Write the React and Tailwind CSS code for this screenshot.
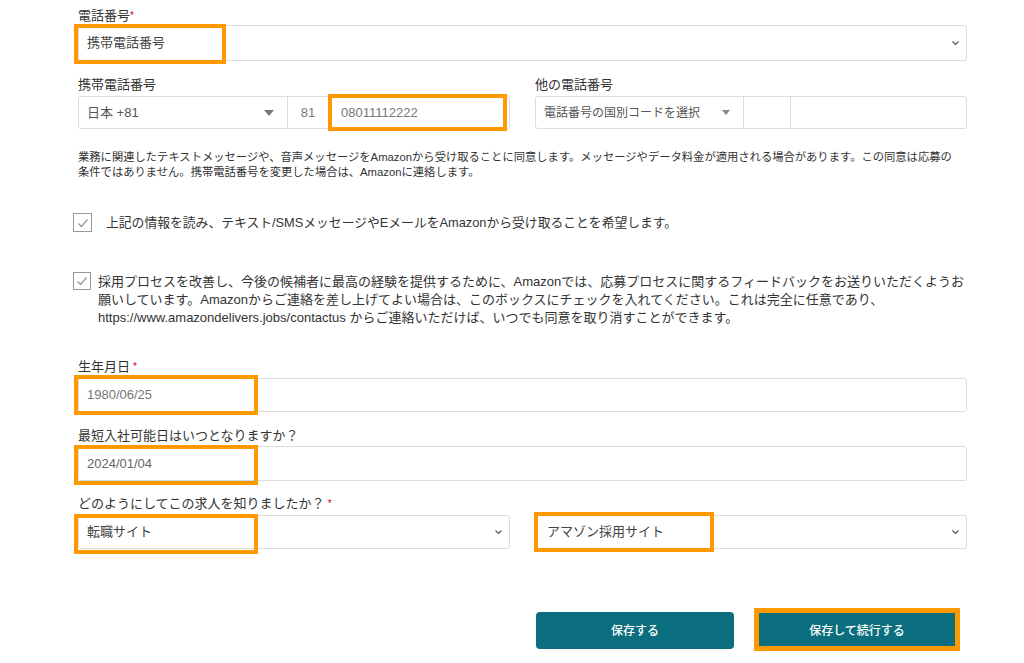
import React from "react";

const Chevron = () => (
  <svg width="9" height="6" viewBox="0 0 9 6">
    <path d="M1.5 1.5l3 3 3-3" fill="none" stroke="#555" strokeWidth="1.2" />
  </svg>
);

const Caret = ({ small }) =>
  small ? (
    <svg width="8" height="5" viewBox="0 0 8 5">
      <path d="M0 0h8L4 5z" fill="#888" />
    </svg>
  ) : (
    <svg width="10" height="6" viewBox="0 0 10 6">
      <path d="M0 0h10L5 6z" fill="#777" />
    </svg>
  );

const Check = () => (
  <svg width="12" height="10" viewBox="0 0 12 10">
    <path d="M1.5 5.5l3 3 6-7" fill="none" stroke="#a08aae" strokeWidth="1.2" />
  </svg>
);

const Req = () => <span className="ml-[3px] text-[10px] align-top text-[#d0021b]">*</span>;

const Label = ({ children, className = "" }) => (
  <div className={`h-4 text-[13px] leading-4 text-[#333] ${className}`}>{children}</div>
);

const App = () => {
  return (
    <div className="min-h-[663px] bg-white font-[Liberation_Sans,Noto_Sans_CJK_JP,sans-serif]">
      <div className="w-[967px] pl-[78px] pt-[8px]">
        {/* 電話番号 */}
        <Label className="mb-px">
          電話番号<span className="text-[10px] align-top text-[#d0021b]">*</span>
        </Label>
        <div className="relative flex h-[36px] items-center justify-between rounded-[3px] border border-[#dcdcdc] pl-2 pr-[6px] text-[13px] text-[#444]">
          <span>携帯電話番号</span>
          <Chevron />
          <div className="pointer-events-none absolute left-[-5px] top-[-2px] h-[40px] w-[152px] border-4 border-[#ff9900]" />
        </div>

        {/* phone numbers */}
        <div className="mt-[16px] grid grid-cols-2 gap-x-[25px]">
          <div>
            <Label className="mb-[3px]">携帯電話番号</Label>
            <div className="relative flex h-[33px] rounded-[3px] border border-[#dcdcdc] text-[13px] text-[#555]">
              <div className="flex w-[209px] items-center justify-between border-r border-[#dcdcdc] pl-2 pr-[13px]">
                <span>日本 +81</span>
                <Caret />
              </div>
              <div className="flex w-[41px] items-center justify-center border-r border-[#dcdcdc] text-[#777]">81</div>
              <div className="flex flex-1 items-center pl-[12px] text-[#777]">08011112222</div>
              <div className="pointer-events-none absolute left-[249px] top-[-3px] h-[37px] w-[179px] border-4 border-[#ff9900]" />
            </div>
          </div>
          <div>
            <Label className="mb-[3px]">他の電話番号</Label>
            <div className="flex h-[33px] rounded-[3px] border border-[#dcdcdc] text-[12px] text-[#555]">
              <div className="flex w-[208px] items-center justify-between border-r border-[#dcdcdc] pl-2 pr-[13px]">
                <span>電話番号の国別コードを選択</span>
                <Caret small />
              </div>
              <div className="w-[47px] border-r border-[#dcdcdc]" />
              <div className="flex-1" />
            </div>
          </div>
        </div>

        <p className="mt-[21px] text-[11.3px] leading-[15px] text-[#333] whitespace-nowrap">
          業務に関連したテキストメッセージや、音声メッセージをAmazonから受け取ることに同意します。メッセージやデータ料金が適用される場合があります。この同意は応募の
          <br />
          条件ではありません。携帯電話番号を変更した場合は、Amazonに連絡します。
        </p>

        {/* checkbox 1 */}
        <div className="mt-[33px] -ml-[5px] flex h-[19px] items-center gap-[14px]">
          <div className="flex h-[19px] w-[19px] items-center justify-center border border-[#999] bg-white">
            <Check />
          </div>
          <span className="text-[12.8px] leading-[19px] text-[#333]">
            上記の情報を読み、テキスト/SMSメッセージやEメールをAmazonから受け取ることを希望します。
          </span>
        </div>

        {/* checkbox 2 */}
        <div className="mt-[40px] -ml-[5px] flex items-start gap-[7px]">
          <div className="flex h-[18px] w-[18px] shrink-0 items-center justify-center border border-[#999] bg-white">
            <Check />
          </div>
          <p className="mt-px text-[13px] leading-[18px] text-[#333] whitespace-nowrap">
            採用プロセスを改善し、今後の候補者に最高の経験を提供するために、Amazonでは、応募プロセスに関するフィードバックをお送りいただくようお
            <br />
            願いしています。Amazonからご連絡を差し上げてよい場合は、このボックスにチェックを入れてください。これは完全に任意であり、
            <br />
            https://www.amazondelivers.jobs/contactus からご連絡いただけば、いつでも同意を取り消すことができます。
          </p>
        </div>

        {/* 生年月日 */}
        <Label className="mt-[32px] mb-[3px]">
          生年月日<Req />
        </Label>
        <div className="relative flex h-[34px] items-center rounded-[3px] border border-[#dcdcdc] pl-2 text-[13px] text-[#777]">
          1980/06/25
          <div className="pointer-events-none absolute left-[-5px] top-[-4px] h-[40px] w-[184px] border-4 border-[#ff9900]" />
        </div>

        <Label className="mt-[16px] mb-[2px]">最短入社可能日はいつとなりますか？</Label>
        <div className="relative flex h-[35px] items-center rounded-[3px] border border-[#dcdcdc] pl-2 text-[13px] text-[#666]">
          2024/01/04
          <div className="pointer-events-none absolute left-[-5px] top-[-2px] h-[40px] w-[184px] border-4 border-[#ff9900]" />
        </div>

        <Label className="mt-[15px] mb-[3px]">
          どのようにしてこの求人を知りましたか？<Req />
        </Label>
        <div className="grid grid-cols-2 gap-x-[25px]">
          <div className="relative flex h-[34px] items-center justify-between rounded-[3px] border border-[#dcdcdc] pl-2 pr-[6px] text-[13px] text-[#444]">
            <span>転職サイト</span>
            <Chevron />
            <div className="pointer-events-none absolute left-[-5px] top-[-2px] h-[40px] w-[184px] border-4 border-[#ff9900]" />
          </div>
          <div className="relative flex h-[34px] items-center justify-between rounded-[3px] border border-[#dcdcdc] pl-[11px] pr-[6px] text-[13px] text-[#444]">
            <span>アマゾン採用サイト</span>
            <Chevron />
            <div className="pointer-events-none absolute left-[-2px] top-[-4px] h-[40px] w-[180px] border-4 border-[#ff9900]" />
          </div>
        </div>

        {/* buttons */}
        <div className="mt-[63px] flex justify-end gap-[24px] pr-[11px]">
          <button
            type="button"
            className="h-[37px] w-[198px] rounded-[4px] bg-[#0a6e7e] text-[12px] font-medium text-white"
          >
            保存する
          </button>
          <div className="relative">
            <button
              type="button"
              className="h-[37px] w-[198px] rounded-[4px] bg-[#0a6e7e] text-[12px] font-medium text-white"
            >
              保存して続行する
            </button>
            <div className="pointer-events-none absolute left-[-4px] top-[-4px] h-[43px] w-[206px] border-[5px] border-[#ff9900]" />
          </div>
        </div>
      </div>
    </div>
  );
};

export default App;
